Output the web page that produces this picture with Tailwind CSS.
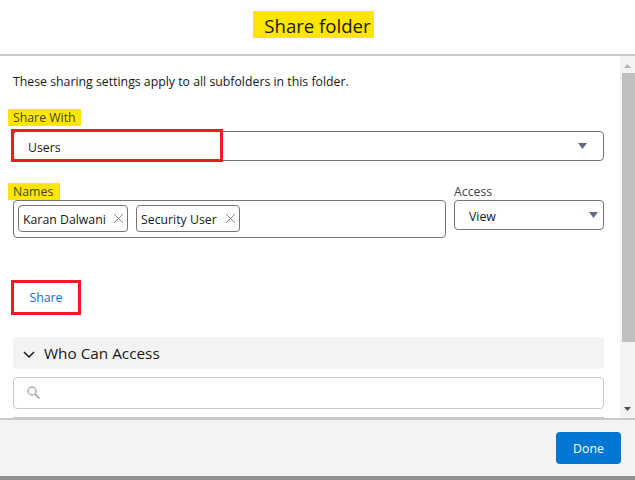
<!DOCTYPE html>
<html>
<head>
<script src="https://cdn.jsdelivr.net/npm/@tailwindcss/browser@4"></script>
</head>
<body class="bg-white">
<div class="w-[635px] h-[480px] flex flex-col overflow-hidden font-['Open_Sans','Noto_Sans',sans-serif] text-[#181818]">
  <header class="h-[56px] shrink-0 flex items-start justify-center border-b-2 border-[#c9c9c9] pt-[11px]">
    <h1 class="bg-[#ffe600] mr-[8px] w-[121px] h-[27px] pl-[8px] text-center text-[18.6px] leading-[30px] font-normal whitespace-nowrap">Share folder</h1>
  </header>
  <div class="flex-1 flex min-h-0">
    <main class="relative w-[620px] pl-[13px] pr-[16px] overflow-hidden">
      <p class="text-[12.3px] leading-[18px] mt-[17px]">These sharing settings apply to all subfolders in this folder.</p>
      <span class="block w-fit bg-[#ffe600] -ml-[5px] mt-[18px] pl-[5px] pr-[5px] h-[17px] text-[12.3px] leading-[17px] text-[#444]">Share With</span>
      <div class="mt-[5px] h-[30px] border border-[#747474] rounded-[4px] flex items-center justify-between pl-[14px] pr-[16px] text-[12.3px]">
        <span class="pt-[4px]">Users</span>
        <svg width="9" height="6" viewBox="0 0 9 6" class="-mt-[1px]"><path d="M0 0h9L4.500 6z" fill="#5a6b8c"/></svg>
      </div>
      <div class="mt-[22px] flex gap-[8px] items-start">
        <div class="w-[433px]">
          <span class="block w-fit bg-[#ffe600] -ml-[5px] pl-[5px] pr-[7px] h-[17px] text-[12.3px] leading-[17px] text-[#444]">Names</span>
          <div class="h-[38px] border border-[#747474] rounded-[4px] flex items-start gap-[8px] pl-[4px] pt-[4px]">
            <span class="h-[27px] w-[110px] border border-[#747474] rounded-[4px] flex items-center justify-between pl-[4px] pr-[3px] text-[12.3px] whitespace-nowrap"><span class="pt-[3px]">Karan Dalwani</span>
              <svg width="11" height="11" viewBox="0 0 11 11" class="-mt-[1px]"><path d="M1 1l9 9M10 1l-9 9" stroke="#8a8a8a" stroke-width="1" fill="none"/></svg>
            </span>
            <span class="h-[27px] w-[104px] border border-[#747474] rounded-[4px] flex items-center justify-between pl-[4px] pr-[3px] text-[12.3px] whitespace-nowrap"><span class="pt-[3px]">Security User</span>
              <svg width="11" height="11" viewBox="0 0 11 11" class="-mt-[1px]"><path d="M1 1l9 9M10 1l-9 9" stroke="#8a8a8a" stroke-width="1" fill="none"/></svg>
            </span>
          </div>
        </div>
        <div class="w-[150px]">
          <span class="block h-[17px] text-[12.3px] leading-[17px] text-[#444]">Access</span>
          <div class="h-[30px] border border-[#747474] rounded-[4px] flex items-center justify-between pl-[14px] pr-[5px] text-[12.3px]">
            <span class="pt-[4px]">View</span>
            <svg width="9" height="6" viewBox="0 0 9 6" class="-mt-[1px]"><path d="M0 0h9L4.500 6z" fill="#5a6b8c"/></svg>
          </div>
        </div>
      </div>
      <button class="block mt-[44px] w-[66px] h-[31px] pt-[2px] text-[12.3px] text-[#0b6fd0] text-center">Share</button>
      <div class="mt-[24px] h-[32px] bg-[#f3f3f3] rounded-[4px] flex items-center pl-[10px] gap-[9px] text-[15.3px]">
        <svg width="12" height="8" viewBox="0 0 12 8" class="mt-[3px]"><path d="M1 1l5 5 5-5" stroke="#181818" stroke-width="1.500" fill="none"/></svg>
        <span>Who Can Access</span>
      </div>
      <div class="mt-[8px] h-[32px] border border-[#c9c9c9] rounded-[4px] flex items-center pl-[13px]">
        <svg width="13" height="13" viewBox="0 0 13 13" class="-mt-[1px]"><circle cx="5" cy="5" r="4" stroke="#aeaeae" stroke-width="1.500" fill="none"/><path d="M8 8l4.500 4.500" stroke="#aeaeae" stroke-width="1.800"/></svg>
      </div>
      <div class="mt-[8px] h-[2px] bg-[#c9c9c9]"></div>
      <div class="absolute left-[11px] top-[73px] w-[212px] h-[33px] border-[3px] border-[#ed1c24]"></div>
      <div class="absolute left-[11px] top-[224px] w-[70px] h-[35px] border-[3px] border-[#ed1c24]"></div>
    </main>
    <aside class="w-[15px] bg-[#f3f3f3] flex flex-col items-center">
      <svg width="7" height="4" viewBox="0 0 7 4" class="mt-[8px] mb-[5px]"><path d="M0 4h7L3.500 0z" fill="#b5b5b5"/></svg>
      <div class="w-[13px] h-[269px] bg-[#bfbfbf] self-end"></div>
      <svg width="7" height="4" viewBox="0 0 7 4" class="mt-[65px]"><path d="M0 0h7L3.500 4z" fill="#505050"/></svg>
    </aside>
  </div>
  <footer class="h-[62px] shrink-0 bg-[#f3f3f3] border-t-2 border-[#c9c9c9] border-b-4 border-b-[#8f8f8f] flex items-start justify-end pr-[14px] pt-[12px]">
    <button class="w-[65px] h-[32px] rounded-[4px] bg-[#0176d3] text-white text-[12.3px] pt-[2px]">Done</button>
  </footer>
</div>
</body>
</html>
